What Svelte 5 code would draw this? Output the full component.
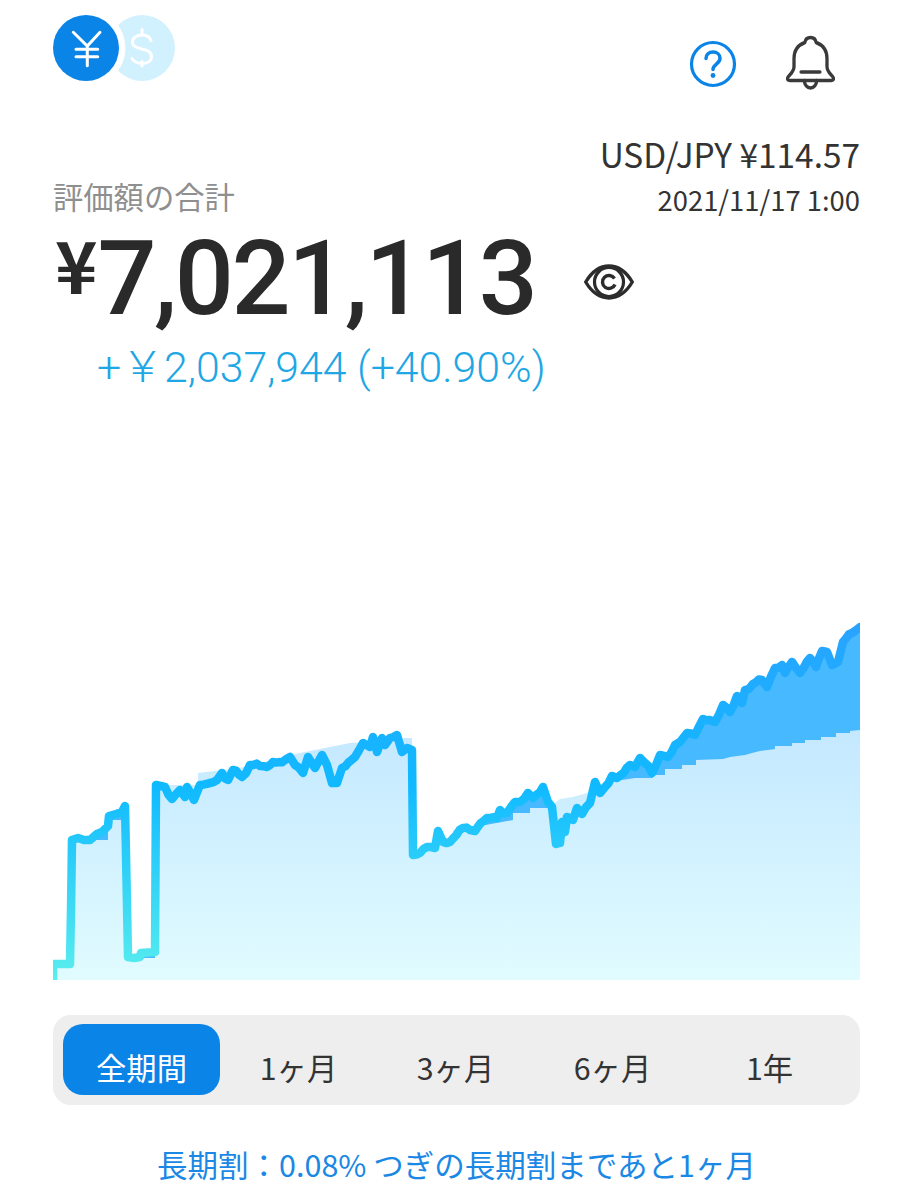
<script>
  const line = [[53,980],[53,964],[70,964],[71,910],[72,840],[78,838],[84,840],[90,840],[97,834],[102,832],[108,826],[109,816],[116,814],[122,812],[125,806],[126,855],[128,957],[134,958],[140,957],[141,953],[155,952],[156,785],[165,787],[172,799],[180,790],[185,797],[187,787],[194,800],[200,785],[210,783],[217,780],[222,773],[228,780],[233,770],[242,777],[250,765],[260,766],[267,767],[273,762],[285,760],[290,757],[295,765],[303,773],[308,757],[315,768],[322,755],[327,765],[332,783],[337,783],[342,768],[355,757],[363,743],[370,747],[373,737],[377,752],[382,738],[385,745],[390,738],[397,735],[402,752],[407,748],[412,750],[413,855],[420,853],[427,847],[435,848],[438,831],[443,842],[450,842],[463,828],[470,830],[475,831],[487,818],[497,818],[500,810],[507,813],[515,802],[520,802],[528,793],[533,798],[543,787],[548,802],[552,807],[556,844],[560,843],[562,822],[565,832],[567,817],[573,820],[577,808],[582,814],[590,803],[595,782],[600,793],[605,787],[612,776],[617,778],[630,765],[635,767],[640,758],[645,763],[652,773],[660,755],[668,757],[675,745],[680,742],[687,733],[695,735],[703,719],[715,722],[723,705],[730,712],[737,696],[742,703],[745,690],[753,684],[762,680],[767,687],[775,668],[782,665],[785,673],[792,662],[800,673],[810,658],[816,667],[822,651],[827,652],[832,665],[838,662],[843,642],[852,633],[860,627]];

  const steps = [[53,980],[53,964],[70,964],[70,840],[108,840],[108,820],[126,820],[126,958],[155,958],[155,785],[198,785],[198,773],[240,768],[300,753],[350,743],[390,741],[403,741],[403,738],[412,738],[412,855],[430,848],[437,838],[453,838],[453,830],[480,826],[513,820],[513,813],[530,813],[530,808],[547,808],[552,805],[560,799],[573,797],[587,793],[600,790],[612,782],[622,780],[635,778],[653,778],[653,775],[665,775],[665,769],[682,769],[682,765],[696,765],[696,760],[723,759],[730,757],[745,755],[752,753],[760,751],[775,749],[775,746],[792,746],[792,743],[805,743],[805,740],[821,740],[821,737],[836,737],[836,733],[850,733],[850,731],[860,730]];

  const dense = [];
  line.forEach(([x, y], i) => {
    const next = line[i + 1];
    dense.push([x, y]);
    if (!next || x < 160) return;
    const dx = next[0] - x;
    const n = Math.floor(dx / 3);
    for (let k = 1; k < n; k++) {
      const px = x + (dx * k) / n;
      const py = y + ((next[1] - y) * k) / n;
      dense.push([+px.toFixed(1), +(py + 1.3 * Math.sin(px * 2.1) + 0.8 * Math.sin(px * 0.9)).toFixed(1)]);
    }
  });

  const toPts = (a) => a.map((p) => p.join(',')).join(' ');
  const linePts = toPts(dense);
  const areaLine = toPts([...line, [860, 980], [53, 980]]);
  const areaSteps = toPts([...steps, [860, 980], [53, 980]]);

  const periods = ['全期間', '1ヶ月', '3ヶ月', '6ヶ月', '1年'];
</script>

<main class="page">
  <header class="top">
    <svg class="logo" viewBox="0 0 122 68" width="122" height="68" aria-hidden="true">
      <circle cx="89" cy="34" r="33" fill="#d2f1ff" />
      <path d="M89 15.500v5M89 47.500v4.500M98 26.500c-1.500-4-5-5.500-9-5.500c-5.500 0-9.500 2.800-9.500 7c0 9.500 19 4.500 19 14.500c0 4.500-4 7-9.500 7c-4 0-7.500-1.500-10-5" fill="none" stroke="#fff" stroke-width="3" stroke-linecap="round" />
      <circle cx="33" cy="34" r="39.500" fill="#fff" />
      <circle cx="33" cy="34" r="33" fill="#0a84e6" />
      <path d="M20.300 18.300L34.300 32L47 18.300M34.300 32V51.700M23 35.300H44.700M23 42.700H44.700" fill="none" stroke="#fff" stroke-width="3" stroke-linecap="round" />
    </svg>
    <div class="actions">
      <svg class="help" viewBox="0 0 48 48" width="48" height="48" aria-hidden="true">
        <circle cx="24" cy="24" r="21.500" fill="none" stroke="#0a84e6" stroke-width="3.200" />
        <path d="M17 18.500c0-4 3-6.500 7-6.500s7 2.500 7 6.200c0 5.800-7 6-7 11.300" fill="none" stroke="#0a84e6" stroke-width="3.500" stroke-linecap="round" />
        <circle cx="24" cy="35.500" r="2.400" fill="#0a84e6" />
      </svg>
      <svg class="bell" viewBox="0 0 52 58" width="49" height="58" preserveAspectRatio="none" aria-hidden="true">
        <path d="M26 3.500c3.500 0 5.500 2 6 5c7 2.500 11.500 8 11.500 16v8c0 4 2 6 4.500 8.500c2 2 2.500 2.500 2.500 3.500c0 1.500-1 2-2.500 2H4c-1.500 0-2.500-.5-2.500-2c0-1 .5-1.500 2.500-3.500c2.500-2.500 4.500-4.500 4.500-8.500v-8c0-8 4.500-13.500 11.500-16c.5-3 2.500-5 6-5z" fill="none" stroke="#3a3a3a" stroke-width="3.500" stroke-linejoin="round" />
        <path d="M19.500 46.500c0 4.500 3 7.500 6.500 7.500s6.500-3 6.500-7.500M16 38h20" fill="none" stroke="#3a3a3a" stroke-width="3.500" stroke-linecap="round" />
      </svg>
    </div>
  </header>

  <section class="summary">
    <div class="label-row">
      <span class="label">評価額の合計</span>
      <div class="rate">
        <span class="rate-value">USD/JPY ¥114.57</span>
        <span class="rate-date">2021/11/17 1:00</span>
      </div>
    </div>
    <div class="total-row">
      <span class="total"><span class="yen">¥</span>7,021,113</span>
      <svg class="eye" viewBox="0 0 50 36" width="50" height="36" aria-hidden="true">
        <path d="M1.700 18C8 7.500 16 2 25 2s17 5.500 23.300 16C42 28.500 34 34 25 34S8 28.500 1.700 18z" fill="none" stroke="#2c2c2c" stroke-width="3.400" stroke-linejoin="round" />
        <circle cx="25" cy="18" r="14.500" fill="none" stroke="#2c2c2c" stroke-width="3.200" />
        <path d="M30.500 14.500A6.500 6.500 0 1 0 31 20.500" fill="none" stroke="#2c2c2c" stroke-width="3.400" />
      </svg>
    </div>
    <div class="delta">+￥2,037,944 (+40.90%)</div>
  </section>

  <svg class="chart" viewBox="53 620 807 360" width="807" height="360" aria-hidden="true">
    <defs>
      <linearGradient id="fillGrad" gradientUnits="userSpaceOnUse" x1="0" y1="730" x2="0" y2="980">
        <stop offset="0" stop-color="#c4e8ff" />
        <stop offset="1" stop-color="#e1fcff" />
      </linearGradient>
      <linearGradient id="lineGrad" gradientUnits="userSpaceOnUse" x1="0" y1="630" x2="0" y2="980">
        <stop offset="0" stop-color="#28a4ff" />
        <stop offset="0.45" stop-color="#10baff" />
        <stop offset="1" stop-color="#5aeeee" />
      </linearGradient>
    </defs>
    <polygon points={areaLine} fill="#47b9ff" />
    <polygon points={areaSteps} fill="url(#fillGrad)" />
    <polyline points={linePts} fill="none" stroke="url(#lineGrad)" stroke-width="8.500" stroke-linejoin="round" stroke-linecap="round" />
  </svg>

  <nav class="periods">
    {#each periods as p, i}
      <button class="period" class:active={i === 0}>{p}</button>
    {/each}
  </nav>

  <p class="note">長期割：0.08% つぎの長期割まであと1ヶ月</p>
</main>

<style>
  :global(body) {
    margin: 0;
    background: #fff;
  }
  .page {
    box-sizing: border-box;
    width: 913px;
    height: 1200px;
    padding: 14px 53px 0;
    overflow: hidden;
    font-family: "Noto Sans CJK JP", "Noto Sans", sans-serif;
    color: #333;
  }
  .top {
    display: flex;
    justify-content: space-between;
    align-items: flex-start;
    height: 116px;
  }
  .logo {
    display: block;
    overflow: visible;
  }
  .actions {
    display: flex;
    align-items: flex-start;
    gap: 49px;
    padding-top: 20px;
  }
  .help {
    margin-top: 6px;
  }
  .bell {
    margin-right: 25px;
  }
  .label-row {
    display: flex;
    justify-content: space-between;
    align-items: flex-end;
  }
  .label {
    font-size: 30.300px;
    line-height: 42px;
    padding-bottom: 3px;
    color: #8f8f8f;
  }
  .rate {
    display: flex;
    flex-direction: column;
    align-items: flex-end;
  }
  .rate-value {
    font-size: 33.400px;
    line-height: 48px;
  }
  .rate-date {
    font-size: 27.400px;
    line-height: 42px;
  }
  .total-row {
    display: flex;
    align-items: center;
    gap: 49px;
    height: 104px;
    margin-top: 7px;
    padding-left: 2px;
  }
  .total {
    display: flex;
    align-items: flex-start;
    font-family: Roboto, "Noto Sans", sans-serif;
    font-size: 104px;
    font-weight: 500;
    line-height: 104px;
    letter-spacing: -2.500px;
    color: #2a2a2a;
  }
  .yen {
    font-family: "Noto Sans CJK JP", sans-serif;
    font-size: 72px;
    font-weight: 700;
    line-height: 72px;
    letter-spacing: 0;
  }
  .eye {
    margin-top: 5px;
  }
  .delta {
    margin-top: 4px;
    margin-left: 44px;
    font-family: Roboto, "Noto Sans CJK JP", sans-serif;
    font-size: 42.800px;
    font-weight: 300;
    line-height: 64px;
    color: #1ea7e4;
  }
  .chart {
    display: block;
    margin-top: 221px;
  }
  .periods {
    display: grid;
    grid-template-columns: repeat(5, 157px);
    box-sizing: border-box;
    height: 90px;
    margin-top: 35px;
    padding: 9px 10px 10px;
    background: #eee;
    border-radius: 18px;
  }
  .period {
    border: none;
    background: none;
    padding: 16px 0 0;
    font: inherit;
    font-size: 30.300px;
    line-height: 53px;
    color: #333;
    border-radius: 20px;
  }
  .period.active {
    background: #0a84e6;
    color: #fff;
  }
  .note {
    margin: 37px 0 0;
    text-align: center;
    font-size: 30.500px;
    line-height: 44px;
    color: #1a88e4;
  }
</style>
